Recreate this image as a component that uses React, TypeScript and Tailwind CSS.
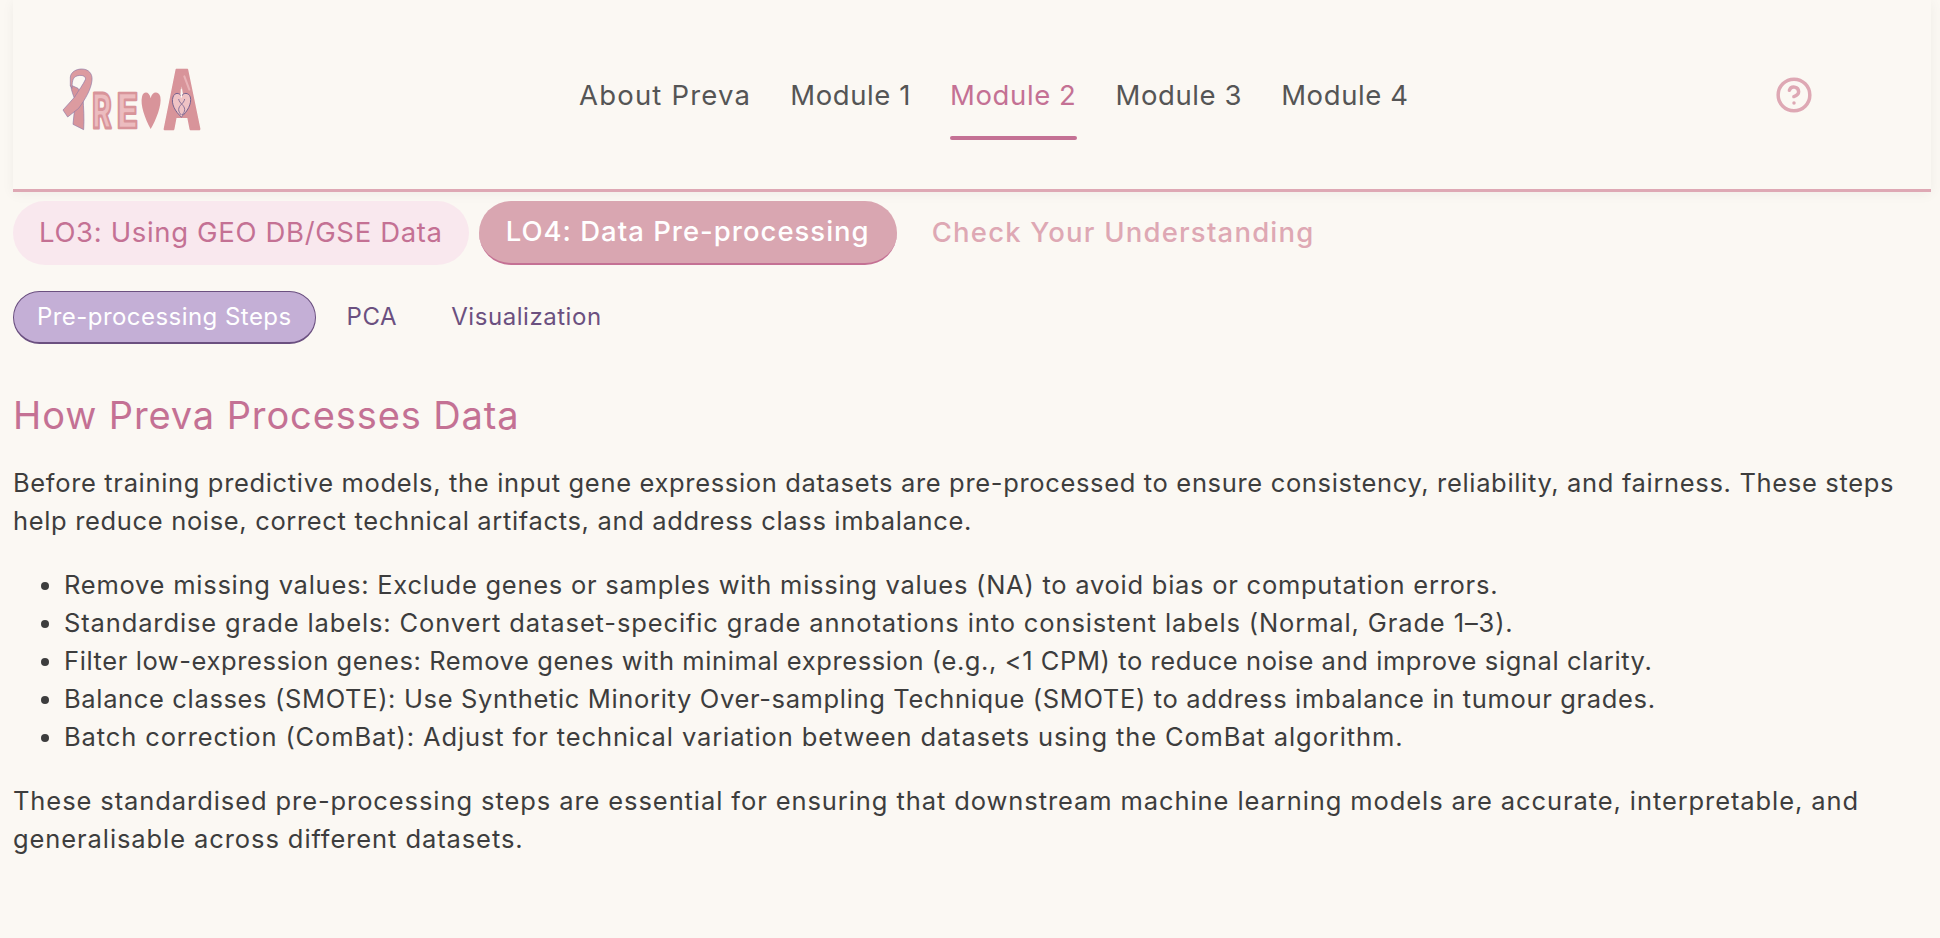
import { CircleHelp } from "lucide-react"

const navItems = ["About Preva", "Module 1", "Module 2", "Module 3", "Module 4"]

const steps = [
  {
    text: "Remove missing values: Exclude genes or samples with missing values (NA) to avoid bias or computation errors.",
    tracking: "tracking-[0.75px]",
  },
  {
    text: "Standardise grade labels: Convert dataset-specific grade annotations into consistent labels (Normal, Grade 1–3).",
    tracking: "tracking-[0.87px]",
  },
  {
    text: "Filter low-expression genes: Remove genes with minimal expression (e.g., <1 CPM) to reduce noise and improve signal clarity.",
    tracking: "tracking-[0.59px]",
  },
  {
    text: "Balance classes (SMOTE): Use Synthetic Minority Over-sampling Technique (SMOTE) to address imbalance in tumour grades.",
    tracking: "tracking-[0.65px]",
  },
  {
    text: "Batch correction (ComBat): Adjust for technical variation between datasets using the ComBat algorithm.",
    tracking: "tracking-[0.88px]",
  },
]

function Logo() {
  return (
    <svg width="160" height="90" viewBox="0 0 480 270" className="block overflow-visible">
      {/* ribbon */}
      <path
        d="M62 90C64 110 72 125 76 138L69 208 101 224C103 190 101 160 99 128L84 100Z"
        fill="#d8949a"
        stroke="#8f7aa6"
        strokeWidth="2"
        strokeLinejoin="round"
      />
      <path
        d="M61 66C63 50 80 42 95 42 116 42 128 56 126 76 123 104 106 132 86 160L53 186 39 165 74 126C86 106 100 88 107 72 107 62 92 58 78 64 68 68 66 82 66 100L61 92Z"
        fill="#dc9ba0"
        stroke="#8f7aa6"
        strokeWidth="2"
        strokeLinejoin="round"
      />
      {/* R and E */}
      <text
        transform="translate(127 218) scale(0.6 1)"
        fontFamily="Inter, sans-serif"
        fontWeight="800"
        fontSize="146"
        fill="#ecbcbf"
        stroke="#d8949a"
        strokeWidth="9"
        strokeLinejoin="round"
      >
        R
      </text>
      <text
        transform="translate(200 218) scale(0.72 1)"
        fontFamily="Inter, sans-serif"
        fontWeight="800"
        fontSize="146"
        fill="#ecbcbf"
        stroke="#d8949a"
        strokeWidth="8"
        strokeLinejoin="round"
      >
        E
      </text>
      {/* heart for the V */}
      <path
        d="M302 222C285 190 270 150 276 125 280 108 298 108 302 130 306 108 326 108 331 125 336 150 318 195 302 222Z"
        fill="#d8949a"
      />
      {/* A */}
      <text
        transform="translate(340 222) scale(0.6 1)"
        fontFamily="Inter, sans-serif"
        fontWeight="800"
        fontSize="244"
        fill="#d8949a"
        stroke="#d8949a"
        strokeWidth="7"
        strokeLinejoin="round"
      >
        A
      </text>
      <path d="M403 64 418 104" stroke="#e9b4b8" strokeWidth="6" strokeLinecap="round" />
      {/* heart with dna */}
      <path
        d="M394 186C376 170 362 146 369 126 374 112 388 112 394 124 400 112 416 112 421 126 426 146 412 170 394 186Z"
        fill="#efc3c5"
        stroke="#75628f"
        strokeWidth="3"
        strokeLinejoin="round"
      />
      <path
        d="M386 132C388 146 404 150 404 164 404 170 400 176 396 180M404 132C402 146 386 150 386 164 386 170 390 176 394 180"
        fill="none"
        stroke="#75628f"
        strokeWidth="2.5"
      />
      <path d="M394 104V126" stroke="#fbf8f3" strokeWidth="4" strokeLinecap="round" />
    </svg>
  )
}

export default function App() {
  return (
    <div className="min-h-[938px] bg-[#fbf8f3] pl-[13px] pr-[9px] font-['Inter',sans-serif]">
      <header className="flex h-[192px] items-center border-b-[3px] border-[#dea8b4] shadow-[0_2px_12px_rgba(0,0,0,0.05)]">
        <div className="ml-[37px] mt-[11px] w-[160px]">
          <Logo />
        </div>
        <nav className="ml-[369px] flex h-full items-stretch gap-[39px]">
          {navItems.map((item) => (
            <div
              key={item}
              className={
                item === "Module 2"
                  ? "relative flex items-center pt-[3px] text-[27.5px] tracking-[0.6px] text-[#c47194]"
                  : item === "About Preva"
                    ? "relative flex items-center pt-[3px] text-[27.5px] tracking-[1.2px] text-[#555555]"
                    : "relative flex items-center pt-[3px] text-[27.5px] tracking-[0.6px] text-[#555555]"
              }
            >
              {item}
              {item === "Module 2" && (
                <span className="absolute bottom-[49px] left-0 right-0 h-[4px] rounded bg-[#c47194]" />
              )}
            </div>
          ))}
        </nav>
        <div className="ml-auto mr-[118px]">
          <CircleHelp size={38} strokeWidth={2.2} color="#dea8b4" />
        </div>
      </header>

      <div className="mt-[9px] flex items-center gap-[10px]">
        <button className="h-[64px] rounded-full bg-[#f9e8ee] px-[26px] text-[27.5px] tracking-[0.65px] text-[#c47194]">
          LO3: Using GEO DB/GSE Data
        </button>
        <button className="h-[64px] rounded-full border-b-2 border-[#c47194] bg-[#d9a6b1] px-[27px] text-[27.5px] font-medium tracking-[1px] text-white">
          LO4: Data Pre-processing
        </button>
        <button className="h-[64px] px-[25px] text-[27.5px] font-medium tracking-[1.2px] text-[#dea8b4]">
          Check Your Understanding
        </button>
      </div>

      <div className="mt-[26px] flex items-center gap-[8px]">
        <button className="h-[53px] rounded-full border border-b-2 border-[#6b5080] bg-[#c4afd6] px-[23px] text-[24px] tracking-[0.45px] text-white">
          Pre-processing Steps
        </button>
        <button className="h-[53px] px-[23px] pb-[2px] text-[24px] tracking-[0.55px] text-[#6b5080]">PCA</button>
        <button className="h-[53px] px-[23px] pb-[2px] text-[24px] tracking-[0.55px] text-[#6b5080]">Visualization</button>
      </div>

      <h1 className="mt-[49px] text-[38px] leading-[44px] tracking-[0.9px] text-[#c47194]">How Preva Processes Data</h1>

      <p className="mt-[27px] text-[25.5px] leading-[38px] tracking-[0.66px] text-[#3d3d3d]">
        Before training predictive models, the input gene expression datasets are pre-processed to ensure consistency, reliability, and fairness. These steps help reduce noise, correct technical artifacts, and address class imbalance.
      </p>

      <ul className="mt-[26px] list-disc pl-[51px] text-[25.5px] leading-[38px] text-[#3d3d3d]">
        {steps.map((step) => (
          <li key={step.text} className={step.tracking}>
            {step.text}
          </li>
        ))}
      </ul>

      <p className="mt-[26px] text-[25.5px] leading-[38px] tracking-[0.91px] text-[#3d3d3d]">
        These standardised pre-processing steps are essential for ensuring that downstream machine learning models are accurate, interpretable, and generalisable across different datasets.
      </p>
    </div>
  )
}
